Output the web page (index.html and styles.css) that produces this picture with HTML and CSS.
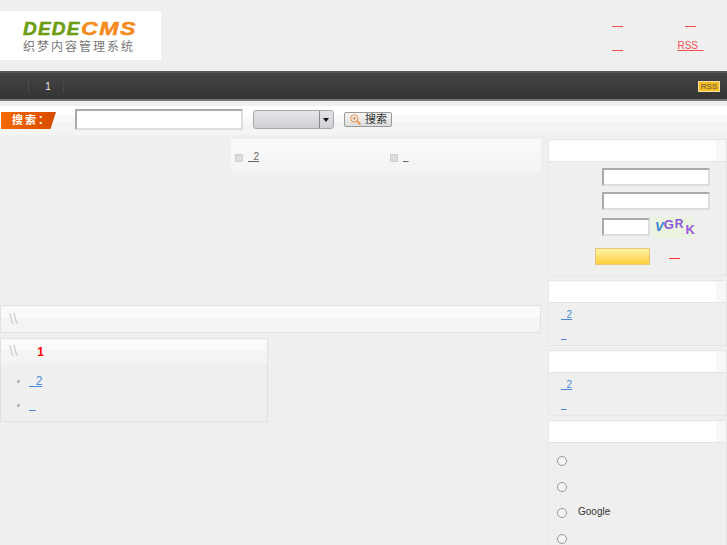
FILE: index.html
```html
<!DOCTYPE html>
<html lang="zh-CN">
<head>
    <meta charset="UTF-8">
    <meta name="viewport" content="width=device-width, initial-scale=1.0">
    <title>DedeCMS</title>
    <link rel="stylesheet" href="styles.css">
</head>
<body>

<div class="header">
    <a class="logo" href="#">
        <span class="logo-mark"><span class="logo-dede">DEDE</span><span class="logo-cms">CMS</span></span>
        <span class="logo-sub">织梦内容管理系统</span>
    </a>
    <div class="top-links">
        <a href="#">&nbsp;&nbsp;&nbsp;&nbsp;</a>
        <a href="#">&nbsp;&nbsp;&nbsp;&nbsp;</a>
        <a href="#">&nbsp;&nbsp;&nbsp;&nbsp;</a>
        <a href="#">RSS&nbsp;&nbsp;</a>
    </div>
</div>

<div class="nav">
    <ul class="nav-list">
        <li><a href="#">1</a></li>
    </ul>
    <a class="rss-badge" href="#">RSS</a>
</div>

<form class="search">
    <span class="search-label">搜索：</span>
    <input class="search-input" type="text">
    <div class="search-select"><span class="select-arrow"></span></div>
    <button class="search-btn" type="button">
        <svg width="16" height="16" viewBox="0 0 16 16" fill="none" stroke="#ee8c3c">
            <circle cx="6.5" cy="6.5" r="4.5" stroke-width="1.2"/>
            <path d="M4.5 6.5h4M6.5 4.5v4" stroke="#d9703a"/>
            <path d="M10 10l4 4" stroke-width="2"/>
        </svg>
        <span>搜索</span>
    </button>
</form>

<div class="page">
    <div class="main">
        <div class="top-row">
            <div class="spacer"></div>
            <ul class="news">
                <li><i class="news-icon"></i><a href="#">&nbsp;&nbsp;2</a></li>
                <li><i class="news-icon"></i><a href="#">&nbsp;&nbsp;</a></li>
            </ul>
        </div>
        <div class="box box-wide">
            <div class="box-head"><span class="slashes">\\</span></div>
        </div>
        <div class="box box-half">
            <div class="box-head"><span class="slashes">\\</span><b class="count">1</b></div>
            <ul class="box-list">
                <li><a href="#">&nbsp;&nbsp;2</a></li>
                <li><a href="#">&nbsp;&nbsp;</a></li>
            </ul>
        </div>
    </div>

    <div class="side">
        <div class="panel">
            <div class="panel-head"></div>
            <form class="login">
                <input class="login-input" type="text">
                <input class="login-input" type="password">
                <div class="login-code">
                    <input class="code-input" type="text">
                    <span class="captcha"><span class="c1">V</span><span class="c2">G</span><span class="c3">R</span><span class="c4">K</span></span>
                </div>
                <div class="login-actions">
                    <button class="login-btn" type="button"></button>
                    <a href="#">&nbsp;&nbsp;&nbsp;&nbsp;</a>
                </div>
            </form>
        </div>
        <div class="panel">
            <div class="panel-head"></div>
            <ul class="panel-list">
                <li><a href="#">&nbsp;&nbsp;2</a></li>
                <li><a href="#">&nbsp;&nbsp;</a></li>
            </ul>
        </div>
        <div class="panel">
            <div class="panel-head"></div>
            <ul class="panel-list">
                <li><a href="#">&nbsp;&nbsp;2</a></li>
                <li><a href="#">&nbsp;&nbsp;</a></li>
            </ul>
        </div>
        <div class="panel panel-last">
            <div class="panel-head"></div>
            <div class="poll">
                <label><input type="radio" name="poll"></label>
                <label><input type="radio" name="poll"></label>
                <label><input type="radio" name="poll"><span>Google</span></label>
                <label><input type="radio" name="poll"></label>
            </div>
        </div>
    </div>
</div>

</body>
</html>
```

FILE: styles.css
```css
html { overflow: hidden; }
body { margin: 0; background-color: #efefef; font-family: "Liberation Sans", "Noto Sans CJK SC", sans-serif; font-size: 12px; color: #333; }
ul { margin: 0; padding: 0; list-style: none; }
a { color: #4a8ad8; text-decoration-thickness: 1px; }
input[type="text"], input[type="password"] { border: 2px solid; border-color: #aaa #ddd #ddd #aaa; background-color: #fff; }

.header { display: flex; justify-content: space-between; height: 71px; }
.logo { display: flex; flex-direction: column; box-sizing: border-box; width: 161px; height: 49px; margin-top: 11px; padding: 8px 0 0 23px; background-color: #fff; text-decoration: none; }
.logo-mark { font-size: 19px; line-height: 19px; font-weight: bold; font-style: italic; letter-spacing: 1.2px; -webkit-text-stroke: 0.5px; }
.logo-dede { color: #6b9c12; }
.logo-cms { display: inline-block; transform: scaleX(1.22); transform-origin: left; color: #f58a1e; }
.logo-sub { margin-top: 2px; font-size: 12px; line-height: 14px; letter-spacing: 2px; color: #777; }
.top-links { display: grid; grid-template-columns: 73px 73px; grid-auto-rows: 24px; padding-top: 16px; justify-items: center; }
.top-links a { color: #f24f4f; font-size: 10px; }

.nav { display: flex; justify-content: space-between; align-items: center; box-sizing: border-box; height: 30px; border-top: 2px solid #575757; border-bottom: 2px solid #777; background: linear-gradient(#454545, #333); }
.nav-list { display: flex; margin-left: 28px; }
.nav-list li { box-sizing: border-box; width: 36px; height: 14px; padding-left: 4px; border-left: 1px solid #4a4a4a; border-right: 1px solid #4a4a4a; line-height: 14px; text-align: center; }
.nav-list a { color: #eee; font-size: 10px; text-decoration: none; }
.rss-badge { margin-right: 7px; width: 20px; height: 9px; border: 1px solid #f5e3a0; background-color: #f6b91e; color: #555; font-size: 8px; line-height: 9px; text-align: center; text-decoration: none; }

.search { display: flex; align-items: center; box-sizing: border-box; height: 31px; margin-top: 3px; background: linear-gradient(transparent 2px, #fff 2px, #fff 11px, #f8f9f8 11px, #f8f9f8 18px, #f4f4f4 18px); }
.search-label { width: 55px; height: 17px; margin: 2px 19px 0 1px; background: linear-gradient(100deg, #f56a00, #d64a00); clip-path: polygon(0 0, 100% 0, 90% 100%, 0 100%); color: #fff; font-size: 11px; font-weight: bold; line-height: 17px; text-indent: 11px; letter-spacing: 2px; }
.search-input { box-sizing: border-box; width: 168px; height: 21px; margin: 0 10px 0 0; }
.search-select { display: flex; justify-content: flex-end; box-sizing: border-box; width: 81px; height: 19px; margin-right: 10px; border: 1px solid #a8a8a8; border-radius: 3px; background: linear-gradient(#e4e5ea, #cfd0d4); }
.select-arrow { position: relative; width: 13px; border-left: 1px solid #888; }
.select-arrow::after { content: ""; position: absolute; top: 7px; left: 3px; border: 3.5px solid transparent; border-top: 4px solid #111; border-bottom: 0; }
.search-btn { display: flex; align-items: center; gap: 3px; box-sizing: border-box; width: 48px; height: 15px; padding: 0 0 0 4px; border: 1px solid #999; border-radius: 2px; background: linear-gradient(#f5f5f5, #ddd); color: #333; font-family: inherit; font-size: 11px; line-height: 13px; }
.search-btn svg { flex: none; width: 13px; height: 13px; }

.page { display: flex; justify-content: space-between; margin-top: 4px; }
.main { width: 541px; }
.top-row { display: flex; height: 166px; }
.spacer { width: 231px; }
.news { display: flex; width: 310px; height: 34px; padding-top: 10px; box-sizing: border-box; background: linear-gradient(#f9faf9, #f3f3f3); }
.news li { display: flex; align-items: center; width: 155px; height: 14px; padding-left: 4px; box-sizing: border-box; }
.news a { color: #666; font-size: 10px; }
.news-icon { width: 6px; height: 6px; margin: 4px 5px 0 0; border: 1px solid #ccc; border-radius: 1px; background-color: #ddd; }

.box { box-sizing: border-box; border: 1px solid #e2e2e2; }
.box-head { height: 25px; background: linear-gradient(#f9fbfa 45%, #f4f4f4 45%); line-height: 23px; }
.box-wide { height: 28px; }
.box-wide .box-head { height: 26px; line-height: 26px; }
.box-half { width: 268px; height: 84px; margin-top: 5px; }
.slashes { margin-left: 8px; color: #ccc; font-size: 15px; }
.count { margin-left: 20px; color: #f00; font-size: 12px; }
.box-list { padding: 5px 0 0 16px; }
.box-list li { height: 24px; line-height: 24px; font-size: 12px; }
.box-list li::before { content: ""; display: inline-block; width: 3px; height: 3px; margin-right: 9px; background-color: #aaa; border-radius: 50%; vertical-align: middle; }

.side { width: 179px; }
.panel { box-sizing: border-box; margin-bottom: 4px; border: 1px solid #e6e6e6; }
.panel-head { height: 20px; border-top: 1px solid #f6f8f7; border-bottom: 1px solid #e4e4e4; background: linear-gradient(to right, #fff 167px, #f6f8f7 167px); }
.login { display: flex; flex-direction: column; align-items: flex-start; box-sizing: border-box; height: 113px; padding: 6px 0 0 53px; }
.login-input { box-sizing: border-box; width: 108px; height: 18px; margin: 0 0 6px; }
.login-code { display: flex; margin-top: 2px; }
.code-input { box-sizing: border-box; width: 48px; height: 18px; margin: 0 2px 0 0; }
.captcha { display: flex; width: 42px; height: 21px; margin-top: -1px; padding-left: 3px; box-sizing: border-box; background-color: #eaf2e0; font-size: 13px; font-weight: bold; line-height: 20px; }
.c1 { color: #3a7fd0; font-style: italic; }
.c2 { color: #8a55d8; margin-top: -2px; }
.c3 { color: #8a55d8; margin: -3px 0 0 1px; font-size: 12px; }
.c4 { color: #9a5ae0; margin: 3px 0 0 2px; }
.login-actions { display: flex; align-items: center; gap: 19px; margin: 10px 0 0 -7px; }
.login-actions a { margin-top: -6px; color: #f33; font-size: 10px; }
.login-btn { box-sizing: border-box; width: 55px; height: 17px; padding: 0; border: 1px solid #e8c878; background: linear-gradient(#fff0a8, #fdd23c); }
.panel-list { box-sizing: border-box; height: 42px; padding: 2px 0 0 12px; }
.panel-list li { height: 20px; line-height: 20px; font-size: 10px; }
.panel-last { height: 140px; margin-bottom: 0; }
.poll { display: flex; flex-direction: column; padding-top: 5px; }
.poll label { display: flex; align-items: center; height: 26px; padding-left: 8px; }
.poll input { appearance: none; box-sizing: border-box; width: 10px; height: 10px; margin: 0 11px 0 0; flex: none; border: 1px solid #999; border-radius: 50%; background-color: #f4f4f4; }
.poll span { margin-top: -3px; color: #333; font-size: 10px; }
```
